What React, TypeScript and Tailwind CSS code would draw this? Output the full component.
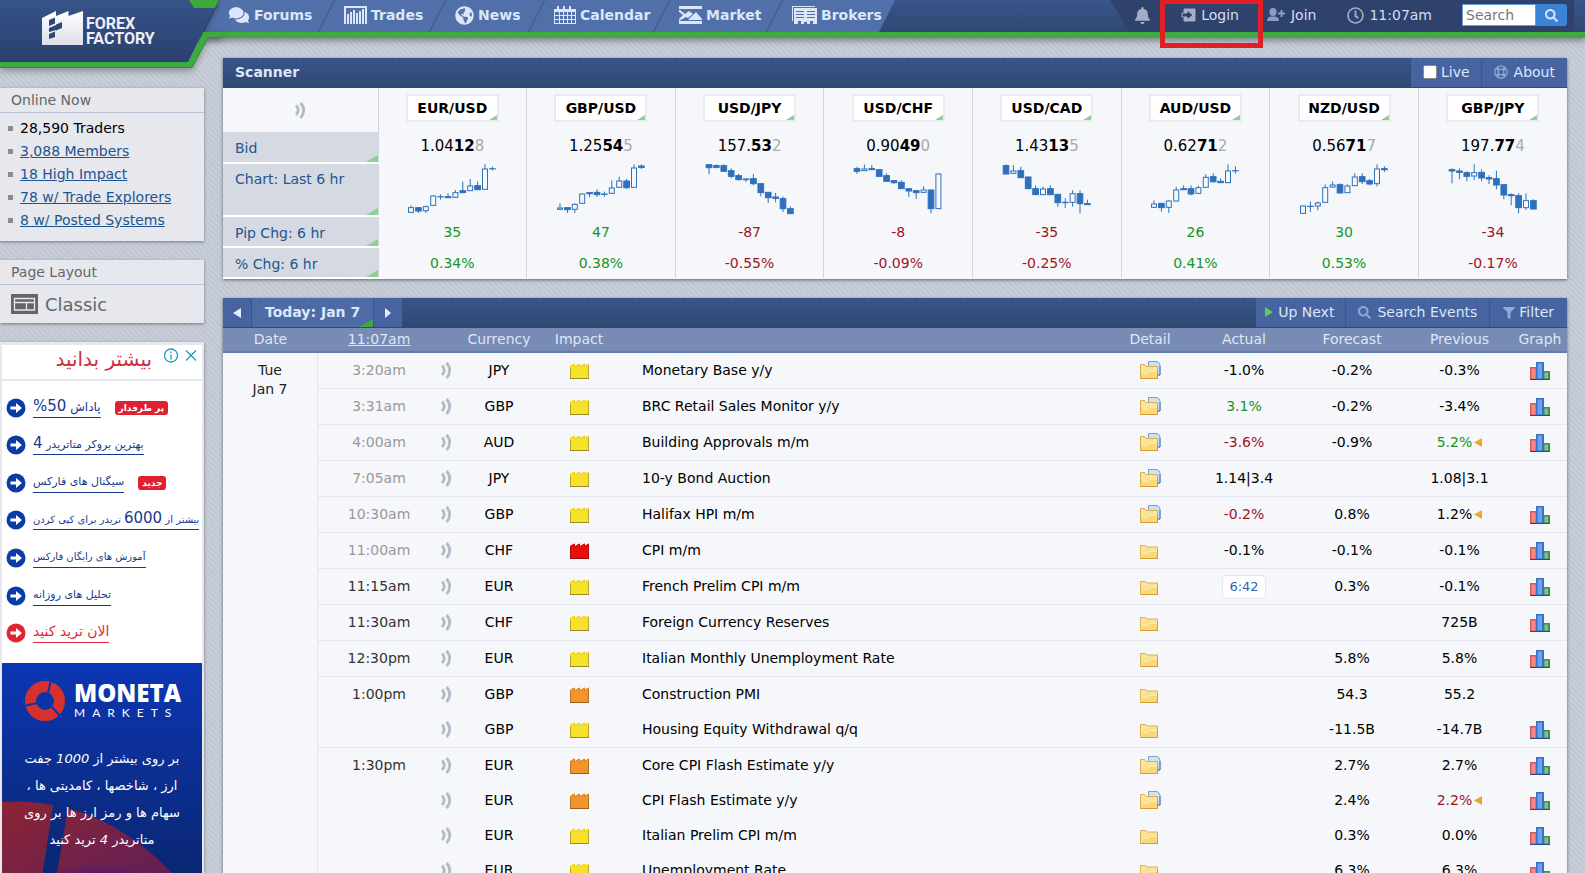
import React from "react";
import {
  FaBell,
  FaComments,
  FaFilter,
  FaGlobeAmericas,
  FaRegClock,
  FaRegLifeRing,
  FaSearch,
} from "react-icons/fa";

type Tone = "up" | "down" | "plain";

const toneClass: Record<Tone, string> = {
  up: "text-[#1a9422]",
  down: "text-[#a0141e]",
  plain: "text-black",
};

/* ---------- icons ---------- */

const TradesIcon = () => (
  <svg width="23" height="18" viewBox="0 0 23 18" fill="currentColor" aria-hidden="true">
    <path d="M0 0h23v18h-2V2H2v16H0z" />
    <path d="M3 8h2v10H3zM6 6h2v12H6zM9 4h2v14H9zM12 7h2v11h-2zM15 5h2v13h-2zM18 3h2v15h-2z" />
  </svg>
);

const CalendarIcon = () => (
  <svg width="22" height="18" viewBox="0 0 22 18" fill="currentColor" aria-hidden="true">
    <path
      fillRule="evenodd"
      d="M0 3h3V0h2v3h4V0h2v3h4V0h2v3h5v15H0zM1 6v3h4V6zm5 0v3h3V6zm4 0v3h3V6zm4 0v3h3V6zm4 0v3h3V6zM1 10v3h4v-3zm5 0v3h3v-3zm4 0v3h3v-3zm4 0v3h3v-3zm4 0v3h3v-3zM1 14v3h4v-3zm5 0v3h3v-3zm4 0v3h3v-3zm4 0v3h3v-3zm4 0v3h3v-3z"
    />
  </svg>
);

const MarketIcon = () => (
  <svg width="23" height="18" viewBox="0 0 23 18" fill="currentColor" aria-hidden="true">
    <path d="M0 0h23v3H0zM0 15h23v3H0z" />
    <path d="M0 4h1l5 4 4-3 4 3-5 4-2-1-7 4v-2l4-4-4-3z" />
    <path d="M9 14l8-8 6 7v1z" />
  </svg>
);

const BrokersIcon = () => (
  <svg width="25" height="18" viewBox="0 0 25 18" fill="currentColor" aria-hidden="true">
    <path d="M0 0h23v1H1v14H0z" />
    <path
      fillRule="evenodd"
      d="M2 2h23v16h-4v-3h-3v3h-3v-2h-3v2H9v-3H6v3H2zM4 5v1h8V5zm0 3v1h8V8zm0 3v1h8v-1zM15 5v1h8V5zm0 3v1h8V8zm0 3v1h8v-1z"
    />
  </svg>
);

const LoginIcon = () => (
  <svg width="15" height="14" viewBox="0 0 15 14" aria-hidden="true">
    <path d="M3 4V1h11v12H3v-3" fill="#a3aec6" stroke="#a3aec6" strokeWidth="1" />
    <path d="M1 5h5V2l6 5-6 5V9H1z" fill="#2f426c" stroke="#c3cbdc" strokeWidth=".8" />
  </svg>
);

const JoinIcon = () => (
  <svg width="19" height="14" viewBox="0 0 19 14" fill="#8e9cbb" aria-hidden="true">
    <ellipse cx="6" cy="4" rx="3.6" ry="4" />
    <path d="M0 13c0-3 2-4 4-4.4l4 0c2 .4 4 1.400 4 4.400zM13.500 2h2v2.500H18v2h-2.500V9h-2V6.500H11v-2h2.500z" />
  </svg>
);

const SoundIcon = () => (
  <svg width="11" height="17" viewBox="0 0 11 17" fill="none" stroke="#b3bbc9" aria-hidden="true">
    <path d="M1 3.500q4.500 4.500 0 9.500" strokeWidth="2.800" />
    <path d="M5.500 1q6.500 7 0 15" strokeWidth="2.800" />
  </svg>
);

const LayoutIcon = () => (
  <svg width="27" height="20" viewBox="0 0 27 20" aria-hidden="true">
    <rect width="27" height="20" fill="#666" />
    <path d="M3.500 4.500h20v11.500h-20zM3.500 8.500h20M15.500 9v7" fill="none" stroke="#e6e8ed" strokeWidth="1.300" />
  </svg>
);

const impactColors = {
  yellow: { fill: "#f6e12c", top: "#f0cf1c", edge: "#9c8a24" },
  orange: { fill: "#f2952c", top: "#e0801c", edge: "#9c5f20" },
  red: { fill: "#ee0c0c", top: "#d40404", edge: "#8c0a0a" },
};
type Impact = keyof typeof impactColors;

const ImpactIcon = ({ level }: { level: Impact }) => {
  const c = impactColors[level];
  return (
    <svg className="mx-auto block" width="19" height="16" viewBox="0 0 19 16" role="img" aria-label={level}>
      <path d="M0 16V3l4.500-2.500V3.500L9.500.500v3l5-3V3L19 .500V16z" fill={c.fill} />
      <path d="M.500 5V3.300L4.500 1v3L9.500 1v3l5-3v2.500L18.500 1v3" fill="none" stroke={c.top} />
      <path d="M.500 5v10.500M18.500 3v12.500" fill="none" stroke={c.edge} strokeOpacity=".7" />
      <path d="M0 15.500h19" stroke={c.edge} />
    </svg>
  );
};

const FolderIcon = ({ doc }: { doc: boolean }) => (
  <svg className="mx-auto block" width="21" height="19" viewBox="0 0 21 19" aria-hidden="true">
    {doc && <path d="M8.500 13V.500H17q3 1 3 4V14H9z" fill="#cfe1f6" stroke="#7d9fd0" />}
    {doc && <path d="M20 5v9h-3" fill="none" stroke="#4f78b8" />}
    <path d={doc ? "M.500 17.500V3.500h4l1.500 2h11.500v12z" : "M.500 17.500v-13h5l1.500 1.500h10.500v11.500z"} fill="#fae39a" stroke="#dcae52" />
    <path d={doc ? "M1 17v-6l6 0 2-2h8.500v8z" : "M2 17v-6.500h5l2-2h8V17z"} fill="#f8d877" />
    <path d="M2 12h6l2-2h7" fill="none" stroke="#fff6d0" />
    <path d="M.500 17.500h17V9" fill="none" stroke="#d49a3c" />
  </svg>
);

const GraphIcon = () => (
  <svg className="mx-auto block" width="20" height="18" viewBox="0 0 20 18" aria-hidden="true">
    <path d="M0 5h6.500v13H0z" fill="#d9575c" />
    <path d="M1.500 6.500h4v10h-4z" fill="#f4898a" />
    <path d="M13.500 9H20v9h-6.500z" fill="#3d8f56" />
    <path d="M14.500 10.500h3.500v6h-3.500z" fill="#7cc487" />
    <path d="M6 0h8v18H6z" fill="#3a6fca" />
    <path d="M7.500 1.500h4.500v15H7.500z" fill="#6aa4ee" />
    <path d="M0 17.500h20" stroke="#274b82" />
  </svg>
);

const Corner = ({ className }: { className: string }) => (
  <svg className={"absolute right-0 bottom-0 " + className} viewBox="0 0 12 7" preserveAspectRatio="none" aria-hidden="true">
    <path d="M0 7L12 0v7z" fill="currentColor" />
  </svg>
);

const ArrowBadge = ({ color }: { color: string }) => (
  <svg className="shrink-0" width="20" height="20" viewBox="0 0 20 20" aria-hidden="true">
    <circle cx="10" cy="10" r="9.500" fill={color} />
    <path d="M4.500 8.500h5.500V5l6 5-6 5v-3.500H4.500z" fill="#fff" />
  </svg>
);

/* ---------- header ---------- */

const navItems: { label: string; icon: React.ReactNode; width: string }[] = [
  { label: "Forums", icon: <FaComments className="h-[18px] w-[22px]" />, width: "w-[116px]" },
  { label: "Trades", icon: <TradesIcon />, width: "w-[111px]" },
  { label: "News", icon: <FaGlobeAmericas className="size-[19px]" />, width: "w-[99px]" },
  { label: "Calendar", icon: <CalendarIcon />, width: "w-[125px]" },
  { label: "Market", icon: <MarketIcon />, width: "w-[113px]" },
  { label: "Brokers", icon: <BrokersIcon />, width: "w-[120px]" },
];

const Logo = () => (
  <a href="#home" className="relative z-10 block h-[72px] w-[222px] shrink-0">
    <svg className="absolute inset-0 drop-shadow-[0_3px_3px_rgba(0,0,0,0.3)]" width="222" height="72" aria-hidden="true">
      <defs>
        <linearGradient id="brand" x1="0" y1="0" x2="0" y2="1">
          <stop offset="0" stopColor="#375388" />
          <stop offset="1" stopColor="#2b4070" />
        </linearGradient>
        <linearGradient id="steel" x1="0" y1="0" x2="0" y2="1">
          <stop offset="0" stopColor="#fff" />
          <stop offset="1" stopColor="#dde0e8" />
        </linearGradient>
      </defs>
      <path d="M0 68h192l16-30.500h14V32h-18l-15 28H0z" fill="#3cab40" />
      <path d="M0 0h190l5 8h20L188 62H0z" fill="url(#brand)" />
      <path d="M189 0h30l-4 8h-21z" fill="#3aaa3a" />
      <path d="M0 67.500h192l16-30h14" fill="none" stroke="#2f8a38" />
      <path d="M42 18l14-7v5l12.500-5v5L83 11v34H42z" fill="url(#steel)" />
      <path d="M49 20l6-2.500v6L49 26zM56 24.500l6-2.500v6l-6 2.500zM49 28l7-3v5l-7 2zM49 34l6-2.500V37l-6 2z" fill="#2f4778" />
    </svg>
    <span className="relative flex flex-col pt-[16px] pl-[86px] font-['Roboto'] text-[16px] leading-[15px] font-bold text-[#eef0f6]">
      <span>FOREX</span>
      <span>FACTORY</span>
    </span>
  </a>
);

const Header = () => (
  <header className="relative z-10 flex h-[38px] border-b-[6px] border-[#3cab40] bg-linear-to-b from-[#38548a] to-[#304872] shadow-[0_3px_6px_rgba(0,0,0,0.35)]">
    <div className="h-[32px] w-[204px] shrink-0">
      <Logo />
    </div>
    <nav className="flex h-[32px] bg-[#5170a9] pl-[7px] text-[14px] font-bold text-[#dbe6fa] [clip-path:polygon(16px_0,100%_0,calc(100%_-_16px)_100%,0_100%)]">
      {navItems.map((item, i) => (
        <a key={item.label} href={"#" + item.label.toLowerCase()} className={"relative flex items-center gap-1 pb-[2px] pl-[17px] whitespace-nowrap " + item.width}>
          {item.icon}
          {item.label}
          {i < navItems.length - 1 && (
            <span className="absolute top-0 right-0 h-[32px] w-px -skew-x-[27deg] bg-[#3b5689]" />
          )}
        </a>
      ))}
    </nav>
    <div className="mr-[11px] ml-auto flex h-[32px] items-center bg-[#2f426b] pb-[2px] pl-[25px] text-[14px] text-[#d3def2] [clip-path:polygon(0_0,100%_0,100%_100%,20px_100%)]">
      <button type="button" aria-label="Notifications" className="text-[#a3aec6]">
        <FaBell className="h-[17px] w-[15px]" />
      </button>
      <a href="#login" className="ml-[31px] flex items-center gap-[5px]">
        <LoginIcon />
        Login
      </a>
      <a href="#join" className="ml-[28px] flex items-center gap-[5px]">
        <JoinIcon />
        Join
      </a>
      <span className="ml-[31px] flex items-center gap-[5px]">
        <FaRegClock className="size-[17px] text-[#a3aec6]" />
        11:07am
      </span>
      <form className="ml-[30px] flex h-[22px]">
        <input
          aria-label="Search"
          placeholder="Search"
          className="h-[22px] w-[74px] border border-[#6b9ad8] bg-white px-[3px] text-[14px] text-black placeholder:text-[#777]"
        />
        <button type="button" aria-label="Run search" className="flex h-[22px] w-[31px] items-center justify-center rounded-r-[3px] bg-[#3b83d4] text-[#cfe3fb]">
          <FaSearch className="size-[13px]" />
        </button>
      </form>
      <span className="w-[7px]" />
    </div>
    <div className="pointer-events-none absolute -top-[1px] right-[322px] h-[49px] w-[103px] border-5 border-[#e11f26]" />
  </header>
);

/* ---------- sidebar ---------- */

const panel = "bg-[#e6e8ed] shadow-[0_1px_3px_rgba(0,0,0,0.4)]";

const online = ["3,088 Members", "18 High Impact", "78 w/ Trade Explorers", "8 w/ Posted Systems"];

const big = "text-[15px]";

const adLinks: { text: React.ReactNode; size: string; badge?: string }[] = [
  { text: <>پاداش <span className={big}>50%</span></>, size: "text-[12px]", badge: "پر طرفدار" },
  { text: <>بهترین بروکر متاتریدر <span className={big}>4</span></>, size: "text-[11px]" },
  { text: "سیگنال های فارکس", size: "text-[11px]", badge: "جدید" },
  { text: <>بیشتر از <span className={big}>6000</span> تریدر برای کپی کردن</>, size: "text-[10px]" },
  { text: "آموزش های رایگان فارکس", size: "text-[10px]" },
  { text: "تحلیل های روزانه", size: "text-[11px]" },
  { text: "الان ترید کنید", size: "text-[14px]" },
];

const Advert = () => (
  <aside className={"min-h-0 flex-1 px-[2px] pt-[3px] " + panel}>
    <div className="overflow-hidden bg-white">
      <div className="flex h-[36px] items-center justify-end border-b-2 border-[#e3e6ea]">
        <a href="#more" dir="rtl" className="pb-[6px] text-[20px] leading-[28px] text-[#cf2f3d]">بیشتر بدانید</a>
        <svg className="mr-[5px] mb-[14px] ml-[12px]" width="33" height="15" viewBox="0 0 33 15" fill="none" stroke="#1a9fb5" strokeWidth="1.300" aria-hidden="true">
          <circle cx="7" cy="7.500" r="6.500" />
          <path d="M7 6.500v5M7 3.500v1.500M22 2.500l10 10M32 2.500l-10 10" />
        </svg>
      </div>
      <ul className="grid h-[282px] grid-rows-7 pt-[8px] pb-[11px]">
        {adLinks.map((l, i) => (
          <li key={i} className={"flex items-center pl-[4px] " + (i === 6 ? "text-[#de2b38]" : "text-[#17398c]")}>
            <ArrowBadge color={i === 6 ? "#e02430" : "#0b3ca6"} />
            <a href={"#ad-" + i} dir="rtl" className={"ml-[7px] block h-[20px] border-b border-current leading-[17px] whitespace-nowrap " + l.size}>
              {l.text}
            </a>
            {l.badge && (
              <span dir="rtl" className="ml-[14px] rounded-[3px] bg-[#e0202e] px-[4px] text-[9px] leading-[14px] font-bold whitespace-nowrap text-white">
                {l.badge}
              </span>
            )}
          </li>
        ))}
      </ul>
      <div className="relative h-[240px] overflow-hidden bg-linear-to-b from-[#0c36b4] to-[#0a2569]">
        <svg className="absolute top-[136px] left-0" width="200" height="104" viewBox="0 0 200 104" aria-hidden="true">
          <defs>
            <linearGradient id="arc" x1="0" y1="0" x2="1" y2="1">
              <stop offset="0" stopColor="#8c2433" />
              <stop offset="1" stopColor="#5a1f5e" />
            </linearGradient>
            <radialGradient id="core" cx=".5" cy="1" r=".6">
              <stop offset="0" stopColor="#3a0aa0" />
              <stop offset="1" stopColor="#3a0aa0" stopOpacity="0" />
            </radialGradient>
          </defs>
          <path d="M0 3Q25 1 51 6L36 104H0zM66 9Q130 28 175 80L175 104H50z" fill="url(#arc)" />
          <rect x="40" y="34" width="110" height="70" fill="url(#core)" />
        </svg>
        <div className="relative flex items-center gap-[8px] pt-[17px] pl-[22px] text-white">
          <svg width="42" height="42" viewBox="0 0 42 42" aria-hidden="true">
            <circle cx="21" cy="21" r="14.500" fill="none" stroke="#d7312f" strokeWidth="11" />
            <path d="M24 13L27 0M13 23L0 26M28 27l9 10" stroke="#0d33a6" strokeWidth="2" />
          </svg>
          <div>
            <div className="font-['Open_Sans'] text-[24px] leading-[24px] font-extrabold">MONETA</div>
            <div className="font-['Lato'] text-[12px] leading-[16px] tracking-[7px]">MARKETS</div>
          </div>
        </div>
        <p dir="rtl" className="relative pt-[23px] text-center text-[13px] leading-[27px] whitespace-nowrap text-white">
          بر روی بیشتر از <i>1000</i> جفت
          <br />
          ارز ، شاخصها ، کامدیتی ها ،
          <br />
          سهام ها و رمز ارز ها بر روی
          <br />
          متاتریدر <i>4</i> ترید کنید
        </p>
      </div>
    </div>
  </aside>
);

const Sidebar = () => (
  <div className="flex w-[204px] shrink-0 flex-col gap-[19px] pt-[50px]">
    <section className={panel}>
      <h2 className="border-b border-[#bcc3d8] px-[11px] text-[14px] leading-[24px] text-[#666]">Online Now</h2>
      <ul className="pt-[4px] pb-[9px] pl-[8px] text-[14px] leading-[23px]">
        <li className="flex items-center gap-[7px]">
          <span className="size-[5px] bg-[#8d8d8d]" />
          28,590 Traders
        </li>
        {online.map((t) => (
          <li key={t} className="flex items-center gap-[7px]">
            <span className="size-[5px] bg-[#8d8d8d]" />
            <a href="#online" className="text-[#1d5490] underline">{t}</a>
          </li>
        ))}
      </ul>
    </section>
    <section className={panel}>
      <h2 className="border-b border-[#bcc3d8] px-[11px] text-[14px] leading-[24px] text-[#666]">Page Layout</h2>
      <button type="button" className="flex h-[38px] items-center gap-[7px] px-[11px] text-[18px] text-[#666]">
        <LayoutIcon />
        Classic
      </button>
    </section>
    <Advert />
  </div>
);

/* ---------- scanner ---------- */

// Each candle: wick top, body top, body bottom, wick bottom, hollow (1) or filled (0).
type Candle = [number, number, number, number, 0 | 1];

interface Pair {
  name: string;
  bid: [string, string, string];
  pips: string;
  pct: string;
  tone: Tone;
  candles: Candle[];
}

const pairs: Pair[] = [
  { name: "EUR/USD", bid: ["1.04", "12", "8"], pips: "35", pct: "0.34%", tone: "up",
    candles: [[127,133,149,149,1],[133,133,145,150,0],[128,130,144,150,1],[98,98,128,128,1],[94,100,102,110,0],[91,100,105,105,0],[81,88,104,104,1],[56,82,90,90,0],[48,68,84,84,1],[56,67,81,81,0],[4,17,80,80,1],[11,16,18,22,0]] },
  { name: "GBP/USD", bid: ["1.25", "54", "5"], pips: "47", pct: "0.38%", tone: "up",
    candles: [[121,134,140,140,1],[133,133,141,150,0],[121,123,140,150,1],[92,92,122,122,1],[88,88,93,102,0],[79,87,96,102,0],[86,92,95,102,0],[52,74,92,92,1],[41,53,74,74,1],[47,53,75,78,0],[4,14,74,74,1],[4,8,14,18,0]] },
  { name: "USD/JPY", bid: ["157.", "53", "2"], pips: "-87", pct: "-0.55%", tone: "down",
    candles: [[4,4,15,34,0],[4,7,14,16,0],[4,7,26,27,0],[16,22,41,46,0],[33,37,51,52,0],[46,47,51,57,0],[33,46,63,67,0],[61,61,90,100,0],[87,87,105,120,0],[90,101,107,118,0],[101,106,138,147,0],[130,136,153,153,0]] },
  { name: "USD/CHF", bid: ["0.90", "49", "0"], pips: "-8", pct: "-0.09%", tone: "down",
    candles: [[11,16,26,33,0],[4,17,24,24,1],[6,16,21,21,0],[19,19,41,41,0],[31,37,56,57,0],[52,52,60,63,0],[52,57,78,78,0],[76,76,85,102,0],[81,82,90,108,0],[70,80,89,90,1],[80,80,138,151,0],[32,32,138,138,1]] },
  { name: "USD/CAD", bid: ["1.43", "13", "5"], pips: "-35", pct: "-0.25%", tone: "down",
    candles: [[4,7,34,34,0],[7,23,32,32,1],[11,22,45,45,0],[41,41,78,78,0],[67,76,96,96,0],[71,77,96,96,1],[67,76,96,96,0],[93,93,120,131,0],[106,117,120,135,0],[82,91,119,131,1],[82,91,123,151,0],[110,121,126,126,0]] },
  { name: "AUD/USD", bid: ["0.62", "71", "2"], pips: "26", pct: "0.41%", tone: "up",
    candles: [[112,122,134,134,1],[120,120,135,146,0],[112,113,134,150,1],[71,80,115,115,1],[67,76,81,81,0],[67,76,94,97,0],[68,73,92,92,1],[34,42,74,74,1],[31,40,57,60,0],[46,54,60,60,0],[4,23,60,60,1],[10,22,24,32,0]] },
  { name: "NZD/USD", bid: ["0.56", "71", "7"], pips: "30", pct: "0.53%", tone: "up",
    candles: [[128,128,152,152,1],[116,129,131,147,0],[116,119,130,142,1],[64,73,119,120,1],[55,65,73,74,1],[61,64,91,91,0],[64,68,90,90,1],[31,41,69,69,1],[31,40,57,63,0],[48,52,64,67,0],[4,17,63,70,1],[10,16,21,27,0]] },
  { name: "GBP/JPY", bid: ["197.", "77", "4"], pips: "-34", pct: "-0.17%", tone: "down",
    candles: [[16,19,25,61,0],[16,23,29,49,0],[25,28,41,55,0],[4,28,40,51,1],[19,27,46,55,0],[37,43,49,63,0],[23,46,67,79,0],[64,64,97,109,0],[91,94,99,127,0],[91,97,135,151,0],[91,112,135,141,1],[109,112,139,139,0]] },
];

const CandleChart = ({ candles, name }: { candles: Candle[]; name: string }) => (
  <svg className="mx-auto block" width="90" height="52" viewBox="0 0 270 156" role="img" aria-label={name + " chart"}>
    {candles.map(([wt, bt, bb, wb, hollow], i) => {
      const x = 12 + i * 22.2;
      const half = hollow ? 7.5 : 8.5;
      return (
        <g key={i} stroke="#2d71bd" strokeWidth="3" fill={hollow ? "#f6f8fc" : "#2d71bd"}>
          <path d={`M${x} ${wt}V${wb}`} />
          <rect x={x - half} y={bt + 1} width={half * 2} height={Math.max(bb - bt - 2, 0.5)} />
        </g>
      );
    })}
  </svg>
);

const scanLabel = "relative border-b-2 border-white bg-[#d4d9e2] px-[12px] text-left align-top font-normal text-[#24558f]";
const titleBar = "bg-linear-to-b from-[#38558b] to-[#304872]";

const Scanner = () => (
  <section className="shadow-[0_1px_3px_rgba(0,0,0,0.5)]">
    <div className={"flex h-[30px] items-stretch text-[14px] text-[#dbe8fb] " + titleBar}>
      <h2 className="pl-[12px] leading-[28px] font-bold">Scanner</h2>
      <div className="mb-px ml-auto flex bg-[#4763a0]">
        <label className="flex items-center gap-[4px] border-r border-[#38548a] pr-[11px] pb-[1px] pl-[12px]">
          <input type="checkbox" className="size-[14px] appearance-none rounded-[2px] border border-[#8a8a8a] bg-white" />
          Live
        </label>
        <button type="button" className="flex items-center gap-[6px] px-[12px] pb-[1px]">
          <FaRegLifeRing className="size-[14px] text-[#8fa6d4]" />
          About
        </button>
      </div>
    </div>
    <table className="w-full table-fixed border-collapse bg-[#f5f7fb] text-center text-[14px]">
      <colgroup>
        <col className="w-[155px]" />
        {pairs.map((p) => <col key={p.name} />)}
      </colgroup>
      <tbody>
        <tr className="h-[44px]">
          <td><span className="flex justify-center"><SoundIcon /></span></td>
          {pairs.map((p) => (
            <th key={p.name} scope="col" className="border-l border-[#d3d6de] p-0 pt-[6px] align-top">
              <button type="button" className="relative h-[28px] w-[93px] border-2 border-[#e8ebf1] bg-white leading-[22px] font-bold">
                {p.name}
                <Corner className="h-[5px] w-[8px] text-[#8fcf92]" />
              </button>
            </th>
          ))}
        </tr>
        <tr className="h-[31px]">
          <th scope="row" className={scanLabel + " leading-[32px]"}>
            <span className="block h-[29px]">Bid</span>
            <Corner className="h-[7px] w-[12px] text-[#8fcf92]" />
          </th>
          {pairs.map((p) => (
            <td key={p.name} className="border-l border-[#d3d6de] text-[15px]">
              <span className="block h-[29px] leading-[26px]">
                {p.bid[0]}<b>{p.bid[1]}</b><span className="text-[#aaa]">{p.bid[2]}</span>
              </span>
            </td>
          ))}
        </tr>
        <tr className="h-[53px]">
          <th scope="row" className={scanLabel + " leading-[30px]"}>
            Chart: Last 6 hr
            <Corner className="h-[7px] w-[12px] text-[#8fcf92]" />
          </th>
          {pairs.map((p) => (
            <td key={p.name} className="border-l border-[#d3d6de] p-0 align-top">
              <CandleChart candles={p.candles} name={p.name} />
            </td>
          ))}
        </tr>
        <tr className="h-[31px]">
          <th scope="row" className={scanLabel + " leading-[32px]"}>
            <span className="block h-[29px]">Pip Chg: 6 hr</span>
            <Corner className="h-[7px] w-[12px] text-[#8fcf92]" />
          </th>
          {pairs.map((p) => (
            <td key={p.name} className={"border-l border-[#d3d6de] pt-[2px] " + toneClass[p.tone]}>{p.pips}</td>
          ))}
        </tr>
        <tr className="h-[31px]">
          <th scope="row" className={scanLabel + " border-b-0 leading-[32px]"}>
            <span className="block h-[29px]">% Chg: 6 hr</span>
            <Corner className="h-[7px] w-[12px] text-[#8fcf92]" />
          </th>
          {pairs.map((p) => (
            <td key={p.name} className={"border-l border-[#d3d6de] pt-[2px] " + toneClass[p.tone]}>{p.pct}</td>
          ))}
        </tr>
      </tbody>
    </table>
  </section>
);

/* ---------- calendar ---------- */

interface Row {
  time: string;
  past?: boolean;
  cur: string;
  impact: Impact;
  event: string;
  doc: boolean;
  actual?: string;
  actualTone?: Tone;
  pending?: boolean;
  forecast?: string;
  previous: string;
  prevTone?: Tone;
  revised?: boolean;
  graph: boolean;
}

const rows: Row[] = [
  { time: "3:20am", past: true, cur: "JPY", impact: "yellow", event: "Monetary Base y/y", doc: true, actual: "-1.0%", forecast: "-0.2%", previous: "-0.3%", graph: true },
  { time: "3:31am", past: true, cur: "GBP", impact: "yellow", event: "BRC Retail Sales Monitor y/y", doc: true, actual: "3.1%", actualTone: "up", forecast: "-0.2%", previous: "-3.4%", graph: true },
  { time: "4:00am", past: true, cur: "AUD", impact: "yellow", event: "Building Approvals m/m", doc: true, actual: "-3.6%", actualTone: "down", forecast: "-0.9%", previous: "5.2%", prevTone: "up", revised: true, graph: true },
  { time: "7:05am", past: true, cur: "JPY", impact: "yellow", event: "10-y Bond Auction", doc: true, actual: "1.14|3.4", previous: "1.08|3.1", graph: false },
  { time: "10:30am", past: true, cur: "GBP", impact: "yellow", event: "Halifax HPI m/m", doc: true, actual: "-0.2%", actualTone: "down", forecast: "0.8%", previous: "1.2%", revised: true, graph: true },
  { time: "11:00am", past: true, cur: "CHF", impact: "red", event: "CPI m/m", doc: false, actual: "-0.1%", forecast: "-0.1%", previous: "-0.1%", graph: true },
  { time: "11:15am", cur: "EUR", impact: "yellow", event: "French Prelim CPI m/m", doc: false, actual: "6:42", pending: true, forecast: "0.3%", previous: "-0.1%", graph: true },
  { time: "11:30am", cur: "CHF", impact: "yellow", event: "Foreign Currency Reserves", doc: false, previous: "725B", graph: true },
  { time: "12:30pm", cur: "EUR", impact: "yellow", event: "Italian Monthly Unemployment Rate", doc: false, forecast: "5.8%", previous: "5.8%", graph: true },
  { time: "1:00pm", cur: "GBP", impact: "orange", event: "Construction PMI", doc: false, forecast: "54.3", previous: "55.2", graph: false },
  { time: "", cur: "GBP", impact: "yellow", event: "Housing Equity Withdrawal q/q", doc: false, forecast: "-11.5B", previous: "-14.7B", graph: true },
  { time: "1:30pm", cur: "EUR", impact: "orange", event: "Core CPI Flash Estimate y/y", doc: true, forecast: "2.7%", previous: "2.7%", graph: true },
  { time: "", cur: "EUR", impact: "orange", event: "CPI Flash Estimate y/y", doc: true, forecast: "2.4%", previous: "2.2%", prevTone: "down", revised: true, graph: true },
  { time: "", cur: "EUR", impact: "yellow", event: "Italian Prelim CPI m/m", doc: false, forecast: "0.3%", previous: "0.0%", graph: true },
  { time: "", cur: "EUR", impact: "yellow", event: "Unemployment Rate", doc: false, forecast: "6.3%", previous: "6.3%", graph: true },
];

const Calendar = () => (
  <section className="bg-[#f5f7fb] shadow-[0_1px_3px_rgba(0,0,0,0.5)]">
    <div className={"flex h-[30px] items-stretch border-b border-[#304872] text-[14px] text-[#dbe8fb] " + titleBar}>
      <button type="button" aria-label="Previous day" className="flex w-[29px] items-center justify-center border-r border-[#38548a] bg-[#4763a0]">
        <svg width="8" height="10" aria-hidden="true"><path d="M8 0v10L0 5z" fill="#e6eefb" /></svg>
      </button>
      <button type="button" className="relative bg-[#4e6ba6] px-[13px] pb-[1px] font-bold">
        Today: Jan 7
        <Corner className="h-[8px] w-[14px] text-[#3fa845]" />
      </button>
      <button type="button" aria-label="Next day" className="flex w-[29px] items-center justify-center border-l border-[#38548a] bg-[#4763a0]">
        <svg width="6" height="10" aria-hidden="true"><path d="M0 0l6 5-6 5z" fill="#e6eefb" /></svg>
      </button>
      <div className="ml-auto flex bg-[#4763a0]">
        <button type="button" className="flex items-center gap-[5px] border-r border-[#38548a] pr-[11px] pb-[1px] pl-[9px]">
          <svg width="8" height="10" aria-hidden="true"><path d="M0 0l8 5-8 5z" fill="#55cf55" /></svg>
          Up Next
        </button>
        <button type="button" className="flex items-center gap-[6px] border-r border-[#38548a] px-[12px] pb-[1px]">
          <FaSearch className="size-[13px] text-[#8fa6d4]" />
          Search Events
        </button>
        <button type="button" className="flex items-center gap-[4px] px-[13px]">
          <FaFilter className="size-[12px] text-[#93a9d6]" />
          Filter
        </button>
      </div>
    </div>
    <table className="w-full table-fixed border-separate border-spacing-0 text-center text-[14px]">
      <colgroup>
        <col className="w-[95px]" />
        <col className="w-[122px]" />
        <col className="w-[12px]" />
        <col className="w-[94px]" />
        <col className="w-[66px]" />
        <col />
        <col className="w-[80px]" />
        <col className="w-[108px]" />
        <col className="w-[108px]" />
        <col className="w-[107px]" />
        <col className="w-[54px]" />
      </colgroup>
      <thead className="bg-[#778bb5] text-[#dfe6f5]">
        <tr className="h-[25px] [&>th]:border-b-2 [&>th]:border-[#5f7cae] [&>th]:p-0 [&>th]:leading-[23px] [&>th]:font-normal">
          <th>Date</th>
          <th><a href="#time" className="underline">11:07am</a></th>
          <th />
          <th>Currency</th>
          <th>Impact</th>
          <th />
          <th>Detail</th>
          <th>Actual</th>
          <th>Forecast</th>
          <th>Previous</th>
          <th>Graph</th>
        </tr>
      </thead>
      <tbody>
        {rows.map((r, i) => (
          <tr key={r.event} className={(r.time && i > 0 ? "h-[36px] [&>td]:border-t [&>td]:border-[#e3e6ee]" : "h-[35px]") + " [&>td]:p-0"}>
            {i === 0 && (
              <th rowSpan={rows.length} scope="rowgroup" className="border-r border-[#e3e6ee] pt-[8px] align-top leading-[19px] font-normal text-[#222]">
                Tue
                <br />
                Jan 7
              </th>
            )}
            <td className={r.past ? "text-[#999]" : "text-[#333]"}>{r.time}</td>
            <td><span className="flex justify-center"><SoundIcon /></span></td>
            <td>{r.cur}</td>
            <td><ImpactIcon level={r.impact} /></td>
            <td className="text-left"><span className="pl-[30px]">{r.event}</span></td>
            <td><FolderIcon doc={r.doc} /></td>
            <td className={toneClass[r.actualTone ?? "plain"]}>
              {r.pending ? (
                <a href="#countdown" className="inline-block rounded-[4px] border border-[#e3e8f0] bg-white px-[6px] text-[13px] leading-[22px] text-[#2a66ad]">{r.actual}</a>
              ) : (
                r.actual
              )}
            </td>
            <td>{r.forecast}</td>
            <td className={toneClass[r.prevTone ?? "plain"]}>
              {r.previous}
              {r.revised && (
                <svg className="ml-[2px] inline-block align-baseline" width="8" height="9" aria-label="revised"><path d="M8 0v9L0 4.500z" fill="#eda72e" /></svg>
              )}
            </td>
            <td>{r.graph && <GraphIcon />}</td>
          </tr>
        ))}
      </tbody>
    </table>
  </section>
);

export default function App() {
  return (
    <div className="flex h-screen flex-col overflow-hidden bg-[#c6ccd6] bg-[repeating-linear-gradient(45deg,#c8ced9_0px,#c8ced9_2px,#c0c7d2_2px,#c0c7d2_4px)] font-['DejaVu_Sans',sans-serif]">
      <Header />
      <div className="flex min-h-0 flex-1 gap-[19px] pr-[18px]">
        <Sidebar />
        <main className="flex min-w-0 flex-1 flex-col gap-[19px] pt-[20px]">
          <Scanner />
          <Calendar />
        </main>
      </div>
    </div>
  );
}
